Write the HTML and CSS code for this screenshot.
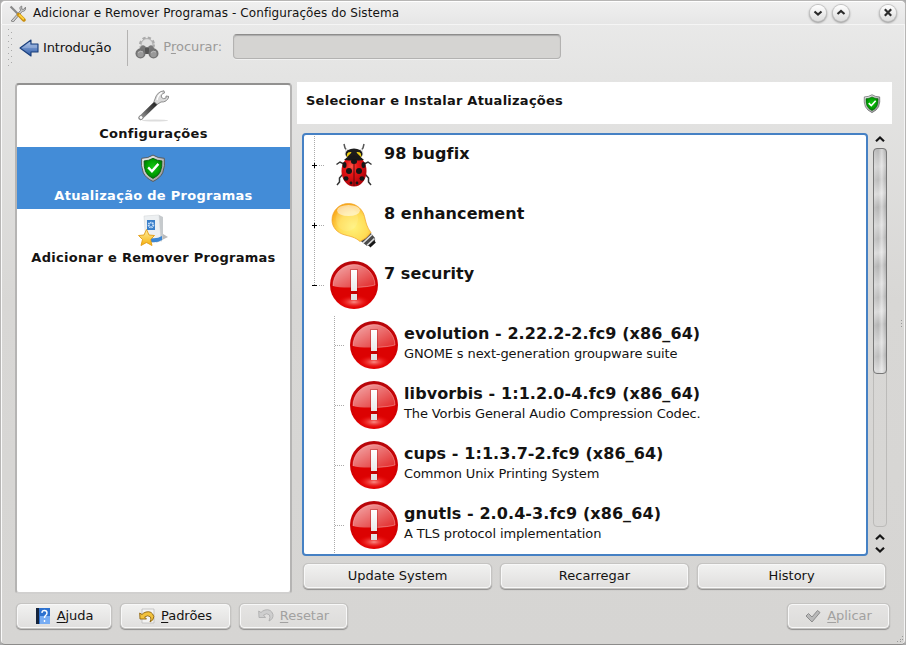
FILE: index.html
```html
<!DOCTYPE html>
<html lang="pt-BR">
<head>
<meta charset="utf-8">
<title>Adicionar e Remover Programas - Configurações do Sistema</title>
<link rel="stylesheet" href="styles.css">
</head>
<body>
<svg class="defs" width="0" height="0" aria-hidden="true">
  <defs>
    <linearGradient id="redBase" x1="0" y1="0" x2="0" y2="1"><stop offset="0" stop-color="#b5060a"/><stop offset=".5" stop-color="#cf0204"/><stop offset="1" stop-color="#e00000"/></linearGradient>
    <linearGradient id="redGloss" x1="0" y1="0" x2="1" y2="1"><stop offset="0" stop-color="#fff" stop-opacity=".68"/><stop offset="1" stop-color="#fff" stop-opacity=".15"/></linearGradient>
    <radialGradient id="redGlow"><stop offset="0" stop-color="#ffb0a8" stop-opacity=".8"/><stop offset="1" stop-color="#f00" stop-opacity="0"/></radialGradient>
    <linearGradient id="mark" x1="0" y1="0" x2="0" y2="1"><stop offset="0" stop-color="#fff"/><stop offset="1" stop-color="#dedede"/></linearGradient>
    <linearGradient id="rim" x1="0" y1="0" x2="1" y2="1"><stop offset="0" stop-color="#f4f4f4"/><stop offset="1" stop-color="#8d8d8d"/></linearGradient>
    <radialGradient id="green" cx=".5" cy=".45" r=".6"><stop offset="0" stop-color="#14c814"/><stop offset=".6" stop-color="#00a000"/><stop offset="1" stop-color="#006a08"/></radialGradient>
    <radialGradient id="beetle" cx=".4" cy=".35" r=".7"><stop offset="0" stop-color="#ff5548"/><stop offset=".35" stop-color="#e81616"/><stop offset="1" stop-color="#a80008"/></radialGradient>
    <radialGradient id="glass" cx=".55" cy=".62" r=".62"><stop offset="0" stop-color="#fff27a"/><stop offset=".6" stop-color="#ffdc55"/><stop offset="1" stop-color="#f9a91c"/></radialGradient>
    <linearGradient id="blue" x1="0" y1="0" x2="0" y2="1"><stop offset="0" stop-color="#a9c2ea"/><stop offset="1" stop-color="#2c5aa6"/></linearGradient>
    <linearGradient id="gold" x1="0" y1="0" x2="0" y2="1"><stop offset="0" stop-color="#fff0a0"/><stop offset="1" stop-color="#f5b00c"/></linearGradient>
    <linearGradient id="handle" gradientUnits="userSpaceOnUse" x1="22" y1="10" x2="3" y2="30"><stop offset="0" stop-color="#111"/><stop offset=".55" stop-color="#555"/><stop offset="1" stop-color="#a5a5a5"/></linearGradient>
    <symbol id="alert" viewBox="0 0 48 48">
      <circle cx="24" cy="24" r="24" fill="url(#redBase)"/>
      <circle cx="24" cy="24.500" r="21.300" fill="#dc0202"/>
      <ellipse cx="24" cy="41" rx="17" ry="7" fill="url(#redGlow)"/>
      <path d="M3 25A21 21 0 0 1 45 24Q38 26 24 26.500Q10 27 3 25Z" fill="url(#redGloss)"/>
      <path d="M3 25A21 21 0 0 1 45 24Q38 26 24 26.500" fill="none" stroke="#fff" stroke-opacity=".4" stroke-width=".8"/>
      <path d="M20 8h8v31h-8z" fill="#900" opacity=".3"/>
      <path d="M21 9h6v21h-6zM21 33h6v6h-6z" fill="url(#mark)"/>
    </symbol>
    <symbol id="shield" viewBox="0 0 24 26">
      <path d="M12 1Q16.500 4 22.500 4Q23.500 11 21 17.500Q18.500 22.500 12 25.500Q5.500 22.500 3 17.500Q.5 11 1.500 4Q7.500 4 12 1Z" fill="url(#rim)" stroke="#55595a" stroke-width=".9"/>
      <path d="M12 4Q16 6.400 20.300 6.400Q20.600 12 18.800 16.500Q17 20.300 12 22.700Q7 20.300 5.200 16.500Q3.400 12 3.700 6.400Q8 6.400 12 4Z" fill="url(#green)" stroke="#06600a" stroke-width=".8"/>
      <path d="M7.500 12.500L11 16L17 9.200" fill="none" stroke="#fff" stroke-width="2.200"/>
    </symbol>
    <symbol id="bug" viewBox="0 0 48 48">
      <g fill="none" stroke="#333" stroke-width="1.500"><path d="M18 11L15 7L14 3M30 11L33 7L34 3" stroke="#555"/><path d="M14 24L10 22L6.500 24.500M34 24L38 22L41.500 24.500M13 34L9.500 38V42L7 45M35 34L38.500 38V42L41 45" transform="translate(0 -1)"/></g>
      <path d="M17 8Q15 11 16 15M31 8Q33 11 32 15" stroke="#ddd" stroke-width="2" fill="none"/>
      <ellipse cx="24" cy="13" rx="8.500" ry="5.500" fill="#1c1c1c"/>
      <ellipse cx="24" cy="30" rx="12.500" ry="15.500" fill="url(#beetle)"/>
      <path d="M14 19Q24 9 34 19Q24 20 14 19Z" fill="#181818"/>
      <path d="M17 15.500L21 11.500L18 12ZM31 15.500L27 11.500L30 12Z" fill="#f4d516" stroke="#f4d516"/>
      <path d="M24 18V45" stroke="#61090c" stroke-width="1"/>
      <g fill="#151515"><ellipse cx="24" cy="20.500" rx="3" ry="2.500"/><circle cx="19" cy="30" r="3"/><circle cx="29" cy="30" r="3"/><ellipse cx="14.500" cy="24" rx="2" ry="3"/><ellipse cx="33.500" cy="24" rx="2" ry="3"/><ellipse cx="16" cy="37.500" rx="2.500" ry="2.200"/><ellipse cx="32" cy="37.500" rx="2.500" ry="2.200"/><circle cx="21" cy="42" r="1.400"/><circle cx="27" cy="42" r="1.400"/></g>
    </symbol>
    <symbol id="bulb" viewBox="0 0 48 48">
      <path d="M29.500 39L39.500 30.500L45 37Q46 42 41 45L37 45Z" fill="#4a4a4a"/>
      <path d="M33 42L42 33.500M37 44.500L44.500 37.500" stroke="#ddd" stroke-width="1.700"/>
      <path d="M39.500 45.500L45 40.500" stroke="#161616" stroke-width="2.500"/>
      <path d="M18.500 2.500C27 2.500 33 9 34.500 15.500C36 22 37 26.500 41 31.500Q37 37.500 30 40.500C25 36 20.500 35.500 15 34C7 32 2 26 2 19C2 10 9 2.500 18.500 2.500Z" fill="url(#glass)" stroke="#efa022" stroke-width=".7"/>
      <ellipse cx="18.500" cy="9.500" rx="11.500" ry="5.500" fill="#fff" opacity=".55"/>
      <ellipse cx="17" cy="18" rx="11" ry="12" fill="#fff" opacity=".1"/>
    </symbol>
    <symbol id="wrench" viewBox="0 0 32 32">
      <ellipse cx="18" cy="30.500" rx="13" ry="1" fill="#ddd"/>
      <path d="M3.500 28L18.500 13.500" stroke="url(#handle)" stroke-width="4.500" stroke-linecap="round"/>
      <path d="M18 9Q20 1.500 27 .8L27.500 3Q23.500 4 24.500 7.500Q26.500 9.500 29 8L29 6L32 6.500Q30 12.500 24 12L20 14.500L17 11.500Z" fill="#d9d9d9" stroke="#858585" stroke-width=".9"/>
      <path d="M20 10Q21 5 25 2.500" stroke="#fff" stroke-width="1.400" fill="none"/>
      <circle cx="4" cy="27.500" r="2" fill="#fff" stroke="#888" stroke-width="1"/>
    </symbol>
    <symbol id="package" viewBox="0 0 32 32">
      <path d="M19 29L31 23L26 20Z" fill="#bbb"/>
      <path d="M7 2L22 1L24 27L9 29Z" fill="#edf0f2" stroke="#d5d8da" stroke-width=".6"/>
      <path d="M22 1L26 3V25L24 28Z" fill="#c6cacd"/>
      <path d="M14 24Q20 25 25 22V26Q20 29 14 28Z" fill="#3b86d3"/>
      <path d="M10 6h8v10h-8z" fill="#3a7fc9"/><circle cx="14" cy="11" r="2.300" fill="none" stroke="#c8e0fa" stroke-width="2" stroke-dasharray="1.200 .6"/>
      <path d="M9.500 15.500L12 21L17.500 21.500L13.500 25.500L15 31.500L9.500 28.500L4 31.500L5.500 25.500L1.500 21.500L7 21Z" fill="url(#gold)" stroke="#e29c14" stroke-width=".9" stroke-linejoin="round"/>
    </symbol>
  </defs>
</svg>
<div class="window">
  <header class="titlebar">
    <svg class="app-icon" viewBox="0 0 16 16"><path d="M2 15L11 5Q9 2 12 1L12 4L14 4L15.500 2Q16 6 12.500 6L4 16Z" fill="#ccc" stroke="#777" stroke-width=".8"/><path d="M1.500 1.500L8 8" stroke="#888" stroke-width="2"/><path d="M9 9L14 14" stroke="#c98f10" stroke-width="3.400" stroke-linecap="round"/><path d="M9.500 9L14 13.500" stroke="#ffd23c" stroke-width="1.800"/></svg>
    <h1 class="title">Adicionar e Remover Programas - Configurações do Sistema</h1>
    <div class="controls">
      <span class="control"><svg viewBox="0 0 16 16"><path d="M4.500 6.500L8 9.500L11.500 6.500"/></svg></span>
      <span class="control"><svg viewBox="0 0 16 16"><path d="M4.500 9L8 6L11.500 9"/></svg></span>
      <span class="control close"><svg viewBox="0 0 16 16"><path d="M4.800 4.300L11.200 10.700M11.200 4.300L4.800 10.700"/></svg></span>
    </div>
  </header>

  <nav class="toolbar">
    <svg class="grip" viewBox="0 0 6 40"><path d="M1.500 1V40" stroke="#aaa" stroke-dasharray="1 5"/><path d="M4.500 4V40" stroke="#aaa" stroke-dasharray="1 5"/></svg>
    <a class="back"><svg viewBox="0 0 20 18"><path d="M1 9L12 1V5H19V13H12V17Z" fill="url(#blue)" stroke="#193e7b" stroke-width="1.100" stroke-linejoin="round"/><path d="M3 9L11 3V6.200H18V9Z" fill="#fff" opacity=".18"/></svg>Introdução</a>
    <span class="divider"></span>
    <svg class="binoculars" viewBox="0 0 24 24"><circle cx="12" cy="8.500" r="6.500" fill="none" stroke="#aaa" stroke-width="3" stroke-dasharray="3 2.100"/><circle cx="12" cy="8.500" r="6" fill="#d2d2d2" stroke="#aaa" stroke-width=".8"/><circle cx="12" cy="8.500" r="5" fill="#e0e0e0"/><path d="M7 9.500Q9 8.500 11 11H13Q15 8.500 17 9.500L23 17H1Z" fill="#777"/><path d="M10 12h4v6h-4z" fill="#555"/><circle cx="5.500" cy="17.500" r="5" fill="#737373"/><circle cx="18.500" cy="17.500" r="5" fill="#737373"/><circle cx="5.500" cy="18" r="3.200" fill="#999"/><circle cx="18.500" cy="18" r="3.200" fill="#999"/><path d="M3 17Q5 14 8 16M16 17Q18 14 21 16" stroke="#bbb" fill="none"/></svg>
    <label class="search-label" for="search">P<u>r</u>ocurar:</label>
    <input class="search" id="search" type="text" disabled>
  </nav>

  <main class="content">
    <aside class="sidebar">
      <a class="module"><svg class="module-icon"><use href="#wrench"/></svg><span>Configurações</span></a>
      <a class="module selected"><svg class="module-icon shield-icon"><use href="#shield"/></svg><span>Atualização de Programas</span></a>
      <a class="module"><svg class="module-icon"><use href="#package"/></svg><span>Adicionar e Remover Programas</span></a>
    </aside>
    <section class="panel">
      <div class="panel-head"><h2>Selecionar e Instalar Atualizações</h2><svg class="head-shield"><use href="#shield"/></svg></div>
      <div class="updates">
        <div class="tree">
          <div class="row"><span class="branch"><i class="expander plus"></i></span><svg class="row-icon"><use href="#bug"/></svg><div class="row-text"><strong>98 bugfix</strong></div></div>
          <div class="row"><span class="branch"><i class="expander plus"></i></span><svg class="row-icon"><use href="#bulb"/></svg><div class="row-text"><strong>8 enhancement</strong></div></div>
          <div class="row last"><span class="branch"><i class="expander"></i></span><svg class="row-icon"><use href="#alert"/></svg><div class="row-text"><strong>7 security</strong></div></div>
          <div class="row child"><span class="branch"></span><svg class="row-icon"><use href="#alert"/></svg><div class="row-text"><strong>evolution - 2.22.2-2.fc9 (x86_64)</strong><span>GNOME s next-generation groupware suite</span></div></div>
          <div class="row child"><span class="branch"></span><svg class="row-icon"><use href="#alert"/></svg><div class="row-text"><strong>libvorbis - 1:1.2.0-4.fc9 (x86_64)</strong><span>The Vorbis General Audio Compression Codec.</span></div></div>
          <div class="row child"><span class="branch"></span><svg class="row-icon"><use href="#alert"/></svg><div class="row-text"><strong>cups - 1:1.3.7-2.fc9 (x86_64)</strong><span>Common Unix Printing System</span></div></div>
          <div class="row child"><span class="branch"></span><svg class="row-icon"><use href="#alert"/></svg><div class="row-text"><strong>gnutls - 2.0.4-3.fc9 (x86_64)</strong><span>A TLS protocol implementation</span></div></div>
        </div>
        <div class="scrollbar">
          <svg class="arrow" viewBox="0 0 10 6"><path d="M1 5.200L5 1.500L9 5.200"/></svg>
          <div class="track"><div class="thumb"></div></div>
          <svg class="arrow" viewBox="0 0 10 6"><path d="M1 5.200L5 1.500L9 5.200"/></svg>
          <svg class="arrow down" viewBox="0 0 10 6"><path d="M1 .8L5 4.500L9 .8"/></svg>
        </div>
      </div>
      <div class="actions"><button>Update System</button><button>Recarregar</button><button>History</button></div>
    </section>
  </main>

  <footer class="footer">
    <button class="help"><svg viewBox="0 0 16 16"><path d="M1 0h14v16H1z" fill="#2e72cf"/><path d="M5 8h10v8H5z" fill="#78adf3"/><path d="M1 0h3v16H1z" fill="#15243c"/><path d="M7 5Q7 2.500 9.500 2.500Q12 2.500 12 5Q12 6.500 10.500 7.500Q9.500 8.500 9.500 10M9.500 12V14" fill="none" stroke="#fff" stroke-width="1.400"/></svg><span><u>A</u>juda</span></button>
    <button class="defaults"><svg viewBox="0 0 16 16"><path d="M3 1h12v14H3z" fill="#f3f3f3" stroke="#bbb" stroke-width=".8"/><path d="M.7 5L1 11H7.500L5.500 9Q9 6.500 11.500 9Q12.500 11 11 14Q15 12 14.800 8.500Q13 2.500 7 4Q4.500 4.700 3 6.500Z" fill="#f2c23c" stroke="#8f6410" stroke-width=".9"/></svg><span><u>P</u>adrões</span></button>
    <button class="reset" disabled><svg viewBox="0 0 16 16"><path d="M.7 3L1 9.500H7.500L5.500 7Q9 4.500 11.500 7Q12.500 9 11 13Q15.500 11 15 6.500Q13 .5 7 2Q4.500 2.700 3 4.500Z" fill="#cecece" stroke="#aaa" stroke-width=".8"/></svg><span><u>R</u>esetar</span></button>
    <button class="apply" disabled><svg viewBox="0 0 16 16"><path d="M1 8L3.500 5.500L7 9L12.500 2.500L15 4.500L7 14Z" fill="#b9b9b9" stroke="#858585" stroke-width=".9" stroke-linejoin="round"/></svg><span><u>A</u>plicar</span></button>
  </footer>
  <span class="edge-grip"></span>
  <svg class="resize-grip" viewBox="0 0 8 8"><path d="M6 1.500h1M4 4.500h1M6 4.500h1M1 6.500h1M4 6.500h1" stroke="#999"/></svg>
</div>
</body>
</html>
```
FILE: styles.css
```css
* { box-sizing: border-box; }
body { margin: 0; width: 906px; height: 645px; overflow: hidden; background: #aaa; color: #141312; font: 13px/16px "DejaVu Sans", sans-serif; }
.defs { position: absolute; }
svg { display: block; flex: none; }
h1, h2 { margin: 0; font-size: 13px; }
h2 { letter-spacing: .25px; }
u { text-underline-offset: 2px; text-decoration-thickness: 1px; }

.window { position: relative; display: flex; flex-direction: column; width: 906px; height: 645px; border: 1px solid #b7b6b5; border-bottom-color: #8c8b8a; border-radius: 5px; background: linear-gradient(#ebebeb, #e4e4e3 75px, #d8d7d5 300px, #d6d5d3); box-shadow: inset 1px 1px #fafafa, inset -1px 0 #f4f4f4; }

.titlebar { display: flex; align-items: center; height: 24px; padding: 0 9px 0 8px; border-bottom: 1px solid #f5f5f5; background: linear-gradient(#f0f0f0, #e6e6e6); border-radius: 5px 5px 0 0; box-shadow: inset 1px 1px #fff; }
.app-icon { width: 17px; height: 17px; margin-top: 2px; }
.title { margin-left: 7px; font-weight: 400; font-size: 12px; letter-spacing: .08px; }
.controls { display: flex; gap: 7px; margin-left: auto; }
.control { width: 16px; height: 16px; border-radius: 50%; background: linear-gradient(#fff, #ddd); box-shadow: 0 0 0 1px #c4c4c4, 0 1px 2px 1px #999; }
.control.close { margin-left: 24px; }
.control path { fill: none; stroke: #2b2b2b; stroke-width: 2.2; }

.toolbar { display: flex; align-items: center; height: 46px; padding: 0 7px; color: #141312; }
.grip { width: 6px; height: 40px; margin-left: -1px; }
.back { display: flex; align-items: center; gap: 4px; margin-left: 6px; letter-spacing: -.15px; }
.back svg { width: 20px; height: 18px; }
.divider { width: 1px; height: 36px; margin-left: 16px; background: #b4b3b2; }
.binoculars { width: 24px; height: 24px; margin-left: 7px; }
.search-label { margin: -2px 0 0 4px; color: #9b9a99; }
.search { width: 328px; height: 25px; margin: -3px 0 0 11px; border: 1px solid #b3b2b1; border-top-color: #8e8d8c; border-radius: 4px; background: #d5d4d2; box-shadow: inset 0 1px 1px #aaa, 0 1px #f1f1f1; }

.content { display: flex; gap: 5px; height: 522px; padding: 11px 13px 0 14px; }
.sidebar { width: 277px; height: 511px; margin-top: 1px; border: 2px solid #b5b4b3; border-top-color: #929190; border-bottom-color: #d1d0cf; border-radius: 4px; background: #fff; }
.module { display: flex; flex-direction: column; align-items: center; height: 62px; font-weight: 700; letter-spacing: .28px; }
.module-icon { width: 32px; height: 32px; margin: 5px 0 4px; }
.shield-icon { width: 26px; height: 28px; margin: 7px 0 6px; }
.module.selected { background: #438cd7; color: #fff; }
.module.selected .module-icon, .module:first-child .module-icon, .module:last-child .module-icon { margin-right: 2px; }
.panel { display: flex; flex-direction: column; width: 595px; }
.panel-head { display: flex; justify-content: space-between; height: 42px; padding: 11px 11px 0 9px; background: #fff; }
.head-shield { width: 18px; height: 19px; margin-top: 1px; }
.updates { display: flex; gap: 5px; height: 423px; margin: 9px 4px 0 5px; }
.tree { width: 566px; overflow: hidden; border: 2px solid #4681c4; border-radius: 4px; background: #fff; }
.row { display: flex; height: 60px; }
.branch { display: flex; align-items: center; width: 20px; height: 60px; background: repeating-linear-gradient(#fff0 0 1px, #aaa 1px 2px) 10px 0 / 1px 100% no-repeat, repeating-linear-gradient(90deg, #aaa 0 1px, #fff0 1px 2px) 15px 30px / 5px 1px no-repeat; }
.last .branch { background-size: 1px 30px, 5px 1px; }
.child { padding-left: 20px; }
.child .branch { background-position: 10px 0, 11px 30px; background-size: 1px 100%, 9px 1px; }
.expander { width: 5px; height: 5px; margin: 1px 0 0 8px; background: linear-gradient(#000 0 0) center / 5px 1px no-repeat; }
.plus { background: linear-gradient(#000 0 0) center / 5px 1px no-repeat, linear-gradient(#000 0 0) center / 1px 5px no-repeat; }
.row-icon { width: 48px; height: 48px; margin: 6px 6px 0; }
.row-text { display: flex; flex-direction: column; padding-top: 9px; white-space: nowrap; }
.row-text strong { font-size: 16px; line-height: 20px; letter-spacing: .08px; }
.row-text span { line-height: 20px; letter-spacing: -.12px; }

.scrollbar { display: flex; flex-direction: column; align-items: center; width: 14px; padding-top: 3px; }
.arrow { width: 10px; height: 6px; fill: none; stroke: #161616; stroke-width: 2.2; }
.track { width: 14px; height: 379px; margin: 6px 0 7px; border: 1px solid #bcbbb9; border-radius: 4px; }
.thumb { width: 14px; height: 226px; margin: -1px; border: 1px solid #777; border-radius: 4px; background: linear-gradient(90deg, #ffffff30, #fff0 35%, #ffffff70 65%, #8883), repeating-linear-gradient(170deg, #b4b4b4 0, #d4d4d4 18px, #bcbcbc 31px, #dadada 45px, #b4b4b4 58px); }
.down { margin-top: 7px; }

button { display: flex; align-items: center; justify-content: center; height: 26px; padding: 0; border: 1px solid #f8f8f8; border-radius: 4px; background: linear-gradient(#f1f1f0, #e0dfde); box-shadow: 0 0 0 1px #c5c4c2, 0 1px 1px 1px #8f8e8d; color: #141312; font: inherit; }
button:disabled { color: #a2a1a0; background: linear-gradient(#e5e4e3, #dddcda); }
.actions { display: grid; grid-template-columns: repeat(3, 187px); gap: 10px; margin: 8px 0 0 7px; }
.actions button { height: 24px; }
.footer { display: flex; gap: 10px; padding: 11px 16px 0; }
.footer button { height: 24px; gap: 6px; letter-spacing: -.05px; }
.footer svg { width: 16px; height: 16px; }
.help { width: 94px; }
.defaults { width: 109px; }
.reset { width: 107px; }
.apply { width: 101px; margin-left: auto; }
.edge-grip { position: absolute; right: 3px; top: 319px; width: 1px; height: 8px; background: repeating-linear-gradient(#999 0 1px, #fff0 1px 3px); }
.resize-grip { position: absolute; right: 1px; bottom: 1px; width: 8px; height: 8px; }
```
